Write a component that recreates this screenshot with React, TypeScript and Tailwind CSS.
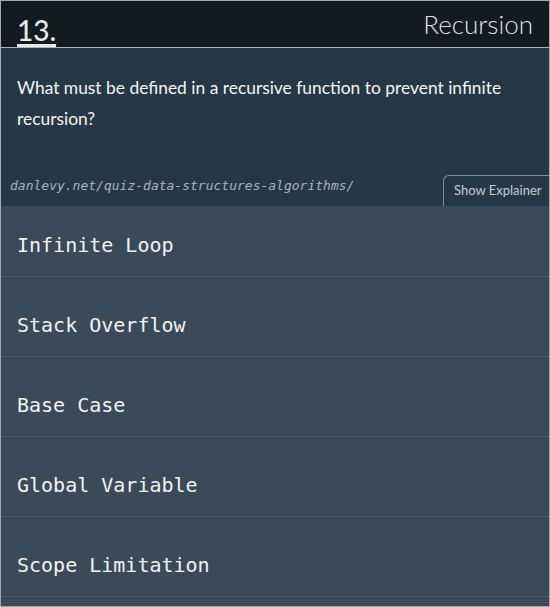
import React from "react";

const options = ["Infinite Loop", "Stack Overflow", "Base Case", "Global Variable", "Scope Limitation"];

export default function App() {
  return (
    <div className="w-[550px] h-[607px] border border-[#a3abb2] bg-[#3a4a58] overflow-hidden flex flex-col">
      <div className="h-[47px] shrink-0 bg-[#131a20] border-b border-[#aab2b9] flex items-end justify-between px-4" style={{ fontFamily: "Lato, 'Noto Sans', sans-serif" }}>
        <span className="text-[28px] leading-[34px] text-[#e6e8ea] font-medium underline underline-offset-[3px] decoration-[3px]">13.</span>
        <span className="text-[26px] leading-[34px] text-[#dfe2e5] font-light pb-[6px]">Recursion</span>
      </div>
      <div className="shrink-0 bg-[#263846] flex flex-col" style={{ fontFamily: "Lato, 'Noto Sans', sans-serif" }}>
        <p className="px-4 pt-[24px] text-[17.4px] leading-[31px] text-[#f4f5f6]">
          What must be defined in a recursive function to prevent infinite recursion?
        </p>
        <div className="flex items-end justify-between mt-[41px]">
          <span className="pl-[9px] pb-[11px] text-[13px] italic text-[#a9b4be]" style={{ fontFamily: "'DejaVu Sans Mono', monospace" }}>
            danlevy.net/quiz-data-structures-algorithms/
          </span>
          <span className="h-[31px] w-[106px] border-t border-l border-[#7f8e9b] rounded-tl-[6px] flex items-center pl-[10px] text-[13px] text-[#c4ccd3]">
            Show Explainer
          </span>
        </div>
      </div>
      <div className="flex flex-col" style={{ fontFamily: "'DejaVu Sans Mono', monospace" }}>
        {options.map((o, i) => (
          <div key={o} className={`border-b border-[#4a5a68] px-4 pb-[19px] text-[20px] leading-[24px] text-[#f2f3f4] ${i === 0 ? "pt-[27px]" : "pt-[36px]"}`}>
            {o}
          </div>
        ))}
      </div>
    </div>
  );
}
